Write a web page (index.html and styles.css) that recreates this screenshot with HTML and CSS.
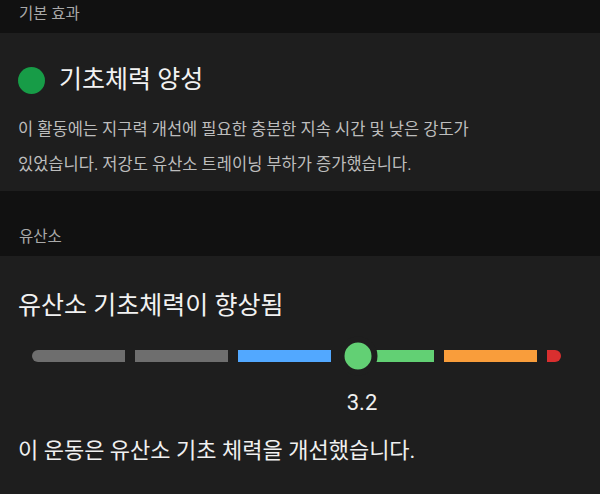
FILE: index.html
```html
<!DOCTYPE html>
<html lang="ko">
<head>
  <meta charset="UTF-8" />
  <meta name="viewport" content="width=device-width, initial-scale=1" />
  <title>기본 효과</title>
  <link rel="stylesheet" href="styles.css">
</head>
<body>

<!-- 기본 효과 -->
<div class="section-label first">기본 효과</div>

<div class="card effect-card">
  <div class="effect-title">
    <span class="dot"></span>
    <span>기초체력 양성</span>
  </div>
  <p class="effect-desc">
    이 활동에는 지구력 개선에 필요한 충분한 지속 시간 및 낮은 강도가<br />
    있었습니다. 저강도 유산소 트레이닝 부하가 증가했습니다.
  </p>
</div>

<!-- 유산소 -->
<div class="section-label second">유산소</div>

<div class="card aerobic-card">
  <div class="aerobic-title">유산소 기초체력이 향상됨</div>

  <div class="scale">
    <div class="seg grey first-seg"></div>
    <div class="seg grey"></div>
    <div class="seg blue"></div>
    <div class="seg green"></div>
    <div class="seg orange"></div>
    <div class="seg red last-seg"></div>
    <span class="marker" style="left: 326px;"></span>
  </div>

  <div class="score" style="margin-left: 314px;">3.2</div>

  <p class="aerobic-desc">이 운동은 유산소 기초 체력을 개선했습니다.</p>
</div>

</body>
</html>
```

FILE: styles.css
```css
body {
  margin: 0;
  background: #111111;
  font-family: Roboto, "Noto Sans CJK KR", sans-serif;
  color: #f0f0f0;
  overflow: hidden;
}

.section-label {
  font-size: 15.5px;
  line-height: 20px;
  color: #a9a9a9;
  padding: 0 19px;
  background: #111111;
}

.section-label.first {
  height: 33px;
  padding-top: 4px;
  box-sizing: border-box;
}

.section-label.second {
  height: 65px;
  padding-top: 36px;
  box-sizing: border-box;
}

.card {
  background: #1e1e1e;
  padding: 0 18px;
}

.effect-card {
  height: 158px;
  padding-top: 31px;
  box-sizing: border-box;
}

.effect-title {
  display: flex;
  align-items: center;
  gap: 14px;
  font-size: 25px;
  line-height: 32px;
  color: #f2f2f2;
}

.dot {
  width: 27px;
  height: 27px;
  border-radius: 50%;
  background: #179c47;
  flex: 0 0 auto;
}

.effect-desc {
  margin: 16px 0 0;
  font-size: 16.5px;
  line-height: 35px;
  color: #bdbdbd;
}

.aerobic-card {
  height: 238px;
  padding-top: 34px;
  box-sizing: border-box;
}

.aerobic-title {
  font-size: 25px;
  line-height: 32px;
  color: #f2f2f2;
}

.scale {
  position: relative;
  display: flex;
  align-items: center;
  gap: 10.5px;
  height: 30px;
  margin: 19px 0 0 14px;
  width: 529px;
}

.seg {
  flex: 0 0 92.5px;
  height: 12px;
}

.seg.grey { background: #6e6e6e; }
.seg.blue { background: #52a8ff; }
.seg.green { background: #62d074; }
.seg.orange { background: #f99d3b; }
.seg.red { background: #d92f2f; }

.first-seg {
  border-radius: 6px 0 0 6px;
}

.last-seg {
  flex-basis: 14px;
  border-radius: 0 6px 6px 0;
}

.marker {
  position: absolute;
  top: 50%;
  width: 27px;
  height: 27px;
  border-radius: 50%;
  background: #62d074;
  border: 6px solid #1e1e1e;
  transform: translate(-50%, -50%);
}

.score {
  width: 60px;
  margin-top: 18px;
  text-align: center;
  font-size: 22px;
  line-height: 28px;
  color: #f0f0f0;
}

.aerobic-desc {
  margin: 19px 0 0;
  font-size: 22px;
  line-height: 30px;
  color: #f0f0f0;
}
```
